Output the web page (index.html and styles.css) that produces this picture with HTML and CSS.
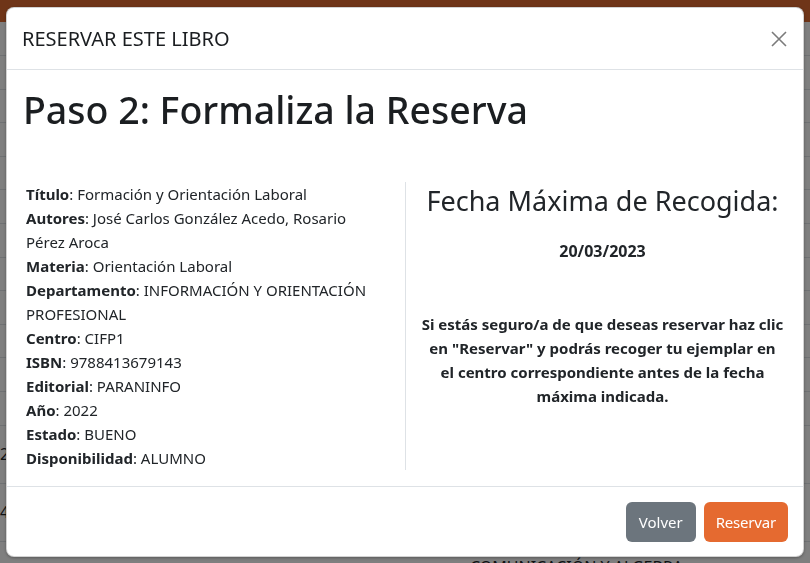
FILE: index.html
```html
<!DOCTYPE html>
<html lang="es">
<head>
<meta charset="utf-8">
<title>Reservar este libro</title>
<link rel="stylesheet" href="styles.css">
</head>
<body>
<div class="page">
  <div class="navbar"></div>
  <table class="bg-table">
    <tr><td></td><td></td></tr>
    <tr><td></td><td></td></tr>
    <tr><td></td><td></td></tr>
    <tr><td></td><td></td></tr>
    <tr><td></td><td></td></tr>
    <tr><td></td><td></td></tr>
    <tr><td></td><td></td></tr>
    <tr><td></td><td></td></tr>
    <tr><td></td><td></td></tr>
    <tr><td></td><td></td></tr>
    <tr><td></td><td></td></tr>
    <tr><td></td><td></td></tr>
    <tr class="tall"><td>2</td><td></td></tr>
    <tr class="tall"><td>4</td><td></td></tr>
    <tr class="tall"><td></td><td class="top">COMUNICACIÓN Y ALGEBRA</td></tr>
  </table>
</div>
<div class="backdrop"></div>
<div class="modal">
  <div class="modal-header">
    <h5 class="modal-title">RESERVAR ESTE LIBRO</h5>
    <button class="btn-close" aria-label="Cerrar">
      <svg viewBox="0 0 16 16" width="16" height="16"><path d="M1 1L15 15M15 1L1 15" stroke="currentColor" stroke-width="1.6" fill="none"/></svg>
    </button>
  </div>
  <div class="modal-body">
    <h1 class="step-title">Paso 2: Formaliza la Reserva</h1>
    <div class="row">
      <div class="col col-info">
        <p><b>Título</b>: Formación y Orientación Laboral</p>
        <p><b>Autores</b>: José Carlos González Acedo, Rosario Pérez Aroca</p>
        <p><b>Materia</b>: Orientación Laboral</p>
        <p><b>Departamento</b>: INFORMACIÓN Y ORIENTACIÓN PROFESIONAL</p>
        <p><b>Centro</b>: CIFP1</p>
        <p><b>ISBN</b>: 9788413679143</p>
        <p><b>Editorial</b>: PARANINFO</p>
        <p><b>Año</b>: 2022</p>
        <p><b>Estado</b>: BUENO</p>
        <p><b>Disponibilidad</b>: ALUMNO</p>
      </div>
      <div class="col col-date">
        <h3 class="date-title">Fecha Máxima de Recogida:</h3>
        <p class="date-value">20/03/2023</p>
        <p class="date-note">Si estás seguro/a de que deseas reservar haz clic en "Reservar" y podrás recoger tu ejemplar en el&nbsp;centro correspondiente antes de la fecha máxima indicada.</p>
      </div>
    </div>
  </div>
  <div class="modal-footer">
    <button class="btn btn-secondary">Volver</button>
    <button class="btn btn-primary">Reservar</button>
  </div>
</div>
</body>
</html>
```

FILE: styles.css
```css
* { box-sizing: border-box; }

html, body {
  margin: 0;
  padding: 0;
  width: 810px;
  height: 563px;
  overflow: hidden;
}

body {
  font-family: "Noto Sans", "Open Sans", sans-serif;
  color: #212529;
  background: #fff;
}

.page { width: 810px; height: 563px; overflow: hidden; }

.navbar {
  height: 22px;
  background: #de6a30;
}

.bg-table {
  width: 100%;
  border-collapse: collapse;
  font-size: 16px;
  color: #212529;
}

.bg-table td {
  height: 33.6px;
  border-bottom: 1px solid #dee2e6;
  padding: 0;
  vertical-align: middle;
  line-height: 20px;
}

.bg-table .tall td { height: 58px; }

.bg-table td.top {
  vertical-align: top;
  padding-top: 15px;
}

.bg-table td:first-child { width: 470px; }

.backdrop {
  position: fixed;
  inset: 0;
  background: rgba(0, 0, 0, 0.5);
}

.modal {
  position: absolute;
  left: 6px;
  top: 7px;
  width: 798px;
  height: 550px;
  background: #fff;
  border: 1px solid rgba(0, 0, 0, 0.175);
  border-radius: 8px;
  display: flex;
  flex-direction: column;
  box-shadow: 0 1px 3px rgba(0, 0, 0, 0.3);
}

.modal-header {
  display: flex;
  align-items: center;
  justify-content: space-between;
  padding: 16px 16px 16px 15px;
  height: 62px;
  border-bottom: 1px solid #dee2e6;
}

.modal-title {
  margin: 0;
  font-size: 20px;
  font-weight: 400;
  line-height: 30px;
  color: #1b1e21;
}

.btn-close {
  border: 0;
  background: none;
  padding: 0;
  width: 16px;
  height: 16px;
  color: #7b7b7b;
  cursor: pointer;
}

.btn-close svg { display: block; }

.modal-body {
  padding: 16px;
  height: 416px;
}

.step-title {
  margin: 0 0 48px 0;
  font-size: 37.5px;
  font-weight: 500;
  line-height: 48px;
  color: #1b1e21;
}

.row {
  display: flex;
  margin: 0 -12px;
}

.col {
  flex: 0 0 50%;
  padding: 0 12px;
}

.col-info {
  padding-left: 15px;
  padding-right: 24px;
  font-size: 15px;
  line-height: 24px;
}

.col-info p { margin: 0; }

.col-info b { font-weight: 700; }

.col-date {
  border-left: 1px solid #dee2e6;
  text-align: center;
  padding-top: 2px;
}

.date-title {
  margin: 0;
  font-size: 27px;
  font-weight: 400;
  line-height: 34px;
}

.date-value {
  margin: 21px 0 0 0;
  font-size: 16px;
  font-weight: 700;
  line-height: 24px;
}

.date-note {
  margin: 49px 0 0 0;
  font-size: 15px;
  font-weight: 700;
  line-height: 24px;
}

.modal-footer {
  display: flex;
  justify-content: flex-end;
  align-items: center;
  gap: 8px;
  padding: 12px 15px 12px 16px;
  border-top: 1px solid #dee2e6;
  flex: 1;
}

.btn {
  font-family: inherit;
  font-size: 15px;
  line-height: 24px;
  padding: 7px 12px;
  border: 1px solid transparent;
  border-radius: 6px;
  color: #fff;
  cursor: pointer;
}

.btn-secondary { background: #6c757d; }

.btn-primary {
  background: #e56a30;
  padding: 7px 11px;
  letter-spacing: -0.2px;
}
```
